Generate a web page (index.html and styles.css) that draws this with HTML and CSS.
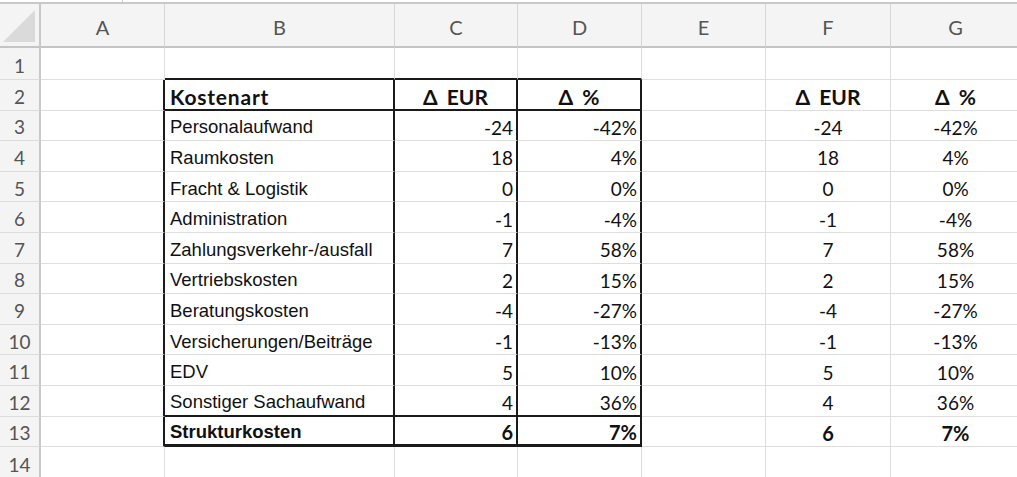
FILE: index.html
```html
<!DOCTYPE html>
<html lang="de">
<head>
<meta charset="utf-8">
<title>Kostenart</title>
<link rel="stylesheet" href="styles.css">
</head>
<body>
<div class="topbar"><div class="namebox"></div></div>
<div class="sheet">
  <div class="ch corner"><span class="tri"></span></div>
  <div class="ch">A</div><div class="ch">B</div><div class="ch">C</div><div class="ch">D</div><div class="ch">E</div><div class="ch">F</div><div class="ch">G</div>

  <div class="rh">1</div>
  <div class="c"></div><div class="c bb"></div><div class="c bb"></div><div class="c bb"></div><div class="c"></div><div class="c"></div><div class="c"></div>

  <div class="rh">2</div>
  <div class="c br"></div><div class="c br bb cal b lft wide">Kostenart</div><div class="c br bb cal b ctr ws">Δ EUR</div><div class="c br bb cal b ctr ws">Δ %</div><div class="c"></div><div class="c cal b ctr ws">Δ EUR</div><div class="c cal b ctr ws">Δ %</div>

  <div class="rh">3</div>
  <div class="c br"></div><div class="c br ari lft">Personalaufwand</div><div class="c br cal rgt">-24</div><div class="c br cal rgt">-42%</div><div class="c"></div><div class="c cal ctr">-24</div><div class="c cal ctr">-42%</div>

  <div class="rh">4</div>
  <div class="c br"></div><div class="c br ari lft">Raumkosten</div><div class="c br cal rgt">18</div><div class="c br cal rgt">4%</div><div class="c"></div><div class="c cal ctr">18</div><div class="c cal ctr">4%</div>

  <div class="rh">5</div>
  <div class="c br"></div><div class="c br ari lft">Fracht &amp; Logistik</div><div class="c br cal rgt">0</div><div class="c br cal rgt">0%</div><div class="c"></div><div class="c cal ctr">0</div><div class="c cal ctr">0%</div>

  <div class="rh">6</div>
  <div class="c br"></div><div class="c br ari lft">Administration</div><div class="c br cal rgt">-1</div><div class="c br cal rgt">-4%</div><div class="c"></div><div class="c cal ctr">-1</div><div class="c cal ctr">-4%</div>

  <div class="rh">7</div>
  <div class="c br"></div><div class="c br ari lft">Zahlungsverkehr-/ausfall</div><div class="c br cal rgt">7</div><div class="c br cal rgt">58%</div><div class="c"></div><div class="c cal ctr">7</div><div class="c cal ctr">58%</div>

  <div class="rh">8</div>
  <div class="c br"></div><div class="c br ari lft">Vertriebskosten</div><div class="c br cal rgt">2</div><div class="c br cal rgt">15%</div><div class="c"></div><div class="c cal ctr">2</div><div class="c cal ctr">15%</div>

  <div class="rh">9</div>
  <div class="c br"></div><div class="c br ari lft">Beratungskosten</div><div class="c br cal rgt">-4</div><div class="c br cal rgt">-27%</div><div class="c"></div><div class="c cal ctr">-4</div><div class="c cal ctr">-27%</div>

  <div class="rh">10</div>
  <div class="c br"></div><div class="c br ari lft">Versicherungen/Beiträge</div><div class="c br cal rgt">-1</div><div class="c br cal rgt">-13%</div><div class="c"></div><div class="c cal ctr">-1</div><div class="c cal ctr">-13%</div>

  <div class="rh">11</div>
  <div class="c br"></div><div class="c br ari lft">EDV</div><div class="c br cal rgt">5</div><div class="c br cal rgt">10%</div><div class="c"></div><div class="c cal ctr">5</div><div class="c cal ctr">10%</div>

  <div class="rh">12</div>
  <div class="c br"></div><div class="c br bb ari lft">Sonstiger Sachaufwand</div><div class="c br bb cal rgt">4</div><div class="c br bb cal rgt">36%</div><div class="c"></div><div class="c cal ctr">4</div><div class="c cal ctr">36%</div>

  <div class="rh">13</div>
  <div class="c br"></div><div class="c br bbt ari b lft">Strukturkosten</div><div class="c br bbt cal b num rgt">6</div><div class="c br bbt cal b num rgt">7%</div><div class="c"></div><div class="c cal b num ctr">6</div><div class="c cal b num ctr">7%</div>

  <div class="rh">14</div>
  <div class="c"></div><div class="c"></div><div class="c"></div><div class="c"></div><div class="c"></div><div class="c"></div><div class="c"></div>
</div>
</body>
</html>
```
FILE: styles.css
```css
* { box-sizing: border-box; }
html, body { margin: 0; padding: 0; background: #ffffff; }
body { width: 1017px; height: 477px; overflow: hidden; }

.topbar {
  height: 4px;
  background: #ffffff;
  border-bottom: 2px solid #c9c9c9;
}
.namebox {
  width: 123px;
  height: 4px;
  border-right: 1px solid #c9c9c9;
}

.sheet {
  display: grid;
  grid-template-columns: 41px 124px 230px 123px 124px 124px 125px 130px;
  grid-template-rows: 44px 32px repeat(12, 30.6px) 32px;
}

.ch {
  background: #f4f4f4;
  border-right: 1px solid #d6d6d6;
  border-bottom: 2px solid #c4c4c4;
  display: flex;
  align-items: center;
  justify-content: center;
  font-family: Lato, "Liberation Sans", sans-serif;
  font-size: 20px;
  color: #555555;
  padding-top: 4px;
}
.corner {
  position: relative;
  border-right: 2px solid #c8c8c8;
}
.tri {
  position: absolute;
  right: 4px;
  bottom: 4px;
  width: 0;
  height: 0;
  border-left: 32px solid transparent;
  border-bottom: 32px solid #dadada;
}

.rh {
  background: #f4f4f4;
  border-right: 2px solid #c8c8c8;
  border-bottom: 1px solid #dcdcdc;
  display: flex;
  align-items: center;
  justify-content: center;
  font-family: Lato, "Liberation Sans", sans-serif;
  font-size: 19px;
  color: #555555;
  padding-top: 3px;
}

.c {
  border-right: 1px solid #dedede;
  border-bottom: 1px solid #dedede;
  display: flex;
  align-items: center;
  white-space: pre;
  overflow: visible;
  color: #111111;
  padding-top: 4px;
}

.br { border-right: 2px solid #1a1a1a; }
.bb { border-bottom: 2px solid #1a1a1a; }
.bbt { border-bottom: 3px solid #1a1a1a; }

.ari { font-family: "Liberation Sans", Arial, sans-serif; font-size: 18.5px; }
.cal { font-family: Lato, "Liberation Sans", sans-serif; font-size: 19px; }
.b { font-weight: 700; }
.cal.b { font-size: 21px; }
.cal.b.num { font-size: 20px; }
.wide { letter-spacing: 0.8px; }
.ws { word-spacing: 4px; }

.lft { justify-content: flex-start; padding-left: 5px; }
.rgt { justify-content: flex-end; padding-right: 3px; }
.ctr { justify-content: center; }
```
